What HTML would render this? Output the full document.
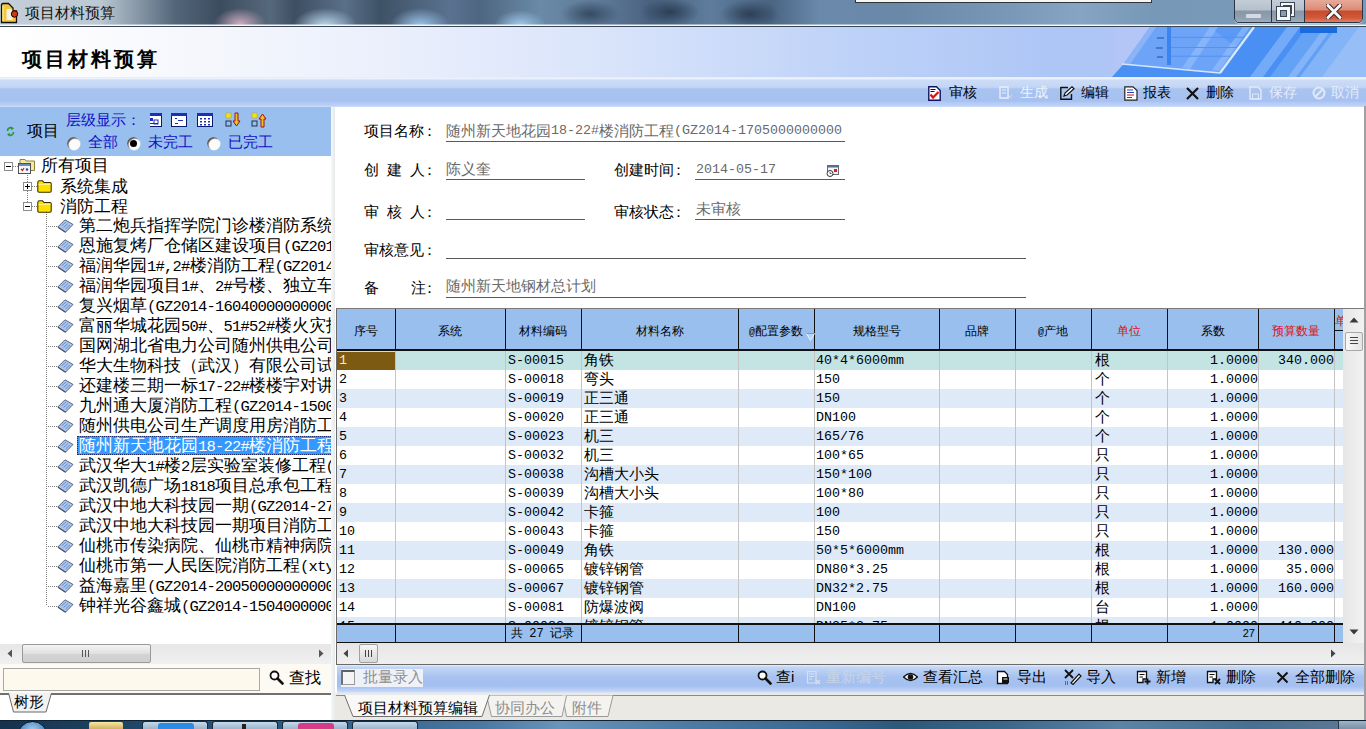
<!DOCTYPE html><html><head><meta charset="utf-8"><title>项目材料预算</title><style>
*{margin:0;padding:0;box-sizing:border-box}
html,body{width:1366px;height:729px;overflow:hidden;background:#fff;font-family:"Liberation Sans",sans-serif;color:#000}
.abs{position:absolute}
.t{position:absolute;white-space:nowrap;line-height:1}
</style></head><body>
<div class="abs" style="left:0;top:0;width:1366px;height:25px;background:radial-gradient(ellipse 26px 16px at 240px 24px,rgba(215,175,195,0.95),rgba(190,150,170,0) 100%),radial-gradient(ellipse 32px 18px at 325px 26px,rgba(190,220,240,1),rgba(170,200,230,0) 100%),radial-gradient(ellipse 30px 18px at 420px 26px,rgba(160,200,238,1),rgba(150,190,230,0) 100%),radial-gradient(ellipse 26px 16px at 520px 26px,rgba(165,205,240,1),rgba(150,190,230,0) 100%),radial-gradient(ellipse 30px 14px at 670px 12px,rgba(40,58,80,0.9),rgba(48,68,90,0) 100%),radial-gradient(ellipse 30px 14px at 750px 14px,rgba(40,58,80,0.9),rgba(48,68,90,0) 100%),radial-gradient(ellipse 30px 14px at 590px 14px,rgba(44,62,84,0.8),rgba(48,68,90,0) 100%),linear-gradient(90deg,#c4ced8 0,#bcc8d2 100px,#8494a4 140px,#52667a 175px,#3c4c5e 220px,#56687c 270px,#3e4e62 295px,#5a7088 345px,#3e5266 380px,#5a7290 450px,#4e6680 480px,#6a8aa8 540px,#5e7a98 600px,#4a6280 650px,#5e7c9c 710px,#4a6482 770px,#6a8aac 820px,#6a88a8 900px,#7896b6 1000px,#86a4c4 1080px,#7898b8 1150px,#7a9aba 1366px)"></div>
<div class="abs" style="left:0;top:24px;width:1366px;height:2px;background:linear-gradient(rgba(230,236,242,0.6),rgba(230,236,242,0.3))"></div>
<div class="abs" style="left:0;top:26px;width:1366px;height:1px;background:#3a4652"></div>
<svg class="abs" style="left:0;top:2px" width="20" height="22" viewBox="0 0 20 22"><path d="M1.5 3 Q1.5 1.5 3 1.5 H8.5 L13 6 V9 H16.5 V20.5 H1.5Z" fill="#f2c840" stroke="#111" stroke-width="1.3"/><path d="M6.5 7 H11 L12.5 9 V18 H6.5Z" fill="#f4f0e6"/><path d="M3 4 V19" stroke="#fff3a0" stroke-width="1"/><circle cx="14.5" cy="12" r="3.2" fill="#c83a18" stroke="#200" stroke-width="1"/></svg>
<div class="t" style="left:25px;top:5px;font-size:15px;color:#111">项目材料预算</div>
<div class="abs" style="left:855px;top:0;width:297px;height:3px;background:#f4f6f8;border:1px solid #333;border-top:0"></div>
<div class="abs" style="left:1234px;top:-3px;width:129px;height:26px;border:1px solid #2a3644;border-radius:0 0 5px 5px;overflow:hidden;box-shadow:0 1px 0 rgba(255,255,255,0.5)"><div class="abs" style="left:0;top:0;width:36px;height:25px;background:linear-gradient(#c6d0da 0,#b4c0cc 12px,#8896a6 13px,#94a4b4 22px,#a8b8c8 25px)"></div><div class="abs" style="left:36px;top:0;width:1px;height:25px;background:#2a3644"></div><div class="abs" style="left:37px;top:0;width:32px;height:25px;background:linear-gradient(#c6d0da 0,#b4c0cc 12px,#8896a6 13px,#94a4b4 22px,#a8b8c8 25px)"></div><div class="abs" style="left:69px;top:0;width:1px;height:25px;background:#2a3644"></div><div class="abs" style="left:70px;top:0;width:59px;height:25px;background:linear-gradient(#eab0a0 0,#dc8a76 12px,#c84a2c 13px,#d05a3a 20px,#e88a70 25px)"></div><div class="abs" style="left:11px;top:16px;width:15px;height:4px;background:#d4dae2;border-radius:1px"></div><div class="abs" style="left:46px;top:5px;width:13px;height:13px;border:2px solid #f4f6f8;box-shadow:0 0 0 1px #3a4654, inset 0 0 0 1px #3a4654"></div><div class="abs" style="left:42px;top:9px;width:13px;height:13px;border:3px solid #f4f6f8;background:#8a9aaa;box-shadow:0 0 0 1px #3a4654, inset 0 0 0 1px #3a4654"></div><svg class="abs" style="left:91px;top:6px" width="16" height="15" viewBox="0 0 16 15"><path d="M2 1.5 L14 13.5 M14 1.5 L2 13.5" stroke="#3a2a2a" stroke-width="5" stroke-linecap="round"/><path d="M2 1.5 L14 13.5 M14 1.5 L2 13.5" stroke="#f8f8f8" stroke-width="3" stroke-linecap="round"/></svg></div>
<div class="abs" style="left:0;top:27px;width:1366px;height:50px;background:linear-gradient(90deg,#ffffff 0,#f8f9fd 150px,#edf1fc 350px,#d8e3fa 620px,#bed2f8 850px,#aec6f6 1050px,#a4c0f2 1366px)"></div>
<div class="t" style="left:22px;top:49px;font-size:20px;font-weight:bold;letter-spacing:3px;color:#000;font-family:'Liberation Serif',serif">项目材料预算</div>
<div class="abs" style="left:0;top:77px;width:1366px;height:30px;background:linear-gradient(#dce6f8 0,#f0f5fe 1px,#e6eefc 2px,#cddcf6 3px,#c4d6f5 10px,#aac4f0 12px,#a6c0f0 24px,#b4cbf4 26px,#bcd2f8 29px,#d8e4fa 30px)"></div>
<svg class="abs" style="left:1100px;top:27px" width="266" height="50" viewBox="0 0 266 50"><defs><linearGradient id="hg" x1="0" x2="1" y1="0" y2="0"><stop offset="0" stop-color="#b4c6f6" stop-opacity="0"/><stop offset="0.08" stop-color="#b4c6f6"/><stop offset="1" stop-color="#aac4f6"/></linearGradient></defs><rect x="0" y="0" width="266" height="50" fill="url(#hg)"/><path d="M23.6 37 L120 45.6 L154 0 H205 V50 H12Z" fill="#4a90f4"/><path d="M23.6 37 L50 0 H154 L120 45.6Z" fill="#6ea4f8"/><path d="M110 0 H154 L138 22Z" fill="#4c92f4" opacity="0.6"/><path d="M50 0 L23.6 37 L30 37.5 L56 0Z" fill="#8ab4f6"/><path d="M82 41 L110 0 H118 L90 42Z" fill="#9cc2fa" opacity="0.55"/><path d="M112 43 L143 0 H150 L119 44Z" fill="#9cc2fa" opacity="0.55"/><rect x="67" y="0" width="4" height="38" fill="#3a84f0"/><path d="M71 10.3 H146 M71 20.5 H139 M71 29.2 H133" stroke="#5292f2" stroke-width="1"/><path d="M57 11 H64 M56 21 H63 M57 30 H63" stroke="#4a78c8" stroke-width="2"/><path d="M22 37 L120 46" stroke="#d4e6fc" stroke-width="1.6"/><path d="M120 46 L154 0" stroke="#d8e8fc" stroke-width="2.2"/><path d="M150 50 L187 0 H200 L163 50Z" fill="#78aef8" opacity="0.9"/><path d="M170 50 L207 0 H226 L189 50Z" fill="#64a2f6"/><path d="M188 50 L225 0 H266 V50Z" fill="#84b4f8"/><path d="M222 50 L259 0 H266 V50Z" fill="#98bef8"/><path d="M196 50 L233 0 H237 L200 50Z" fill="#5a9af4" opacity="0.8"/><rect x="200" y="0" width="37" height="6" fill="#1a6ae0"/></svg>
<svg class="abs" style="left:928px;top:86px" width="13" height="15" viewBox="0 0 13 15"><path d="M0.8 0.8 H8.5 L12.2 4.5 V14.2 H0.8Z" fill="#fff" stroke="#101060" stroke-width="1.4"/><path d="M2.5 3.5 H7.5 M2.5 5.5 H6.5" stroke="#111" stroke-width="1.1"/><path d="M2.5 8.5 L5 11.5 L10.5 6" stroke="#e01010" stroke-width="2.2" fill="none"/></svg>
<div class="t" style="left:949px;top:85px;font-size:14px;color:#000">审核</div>
<svg class="abs" style="left:999px;top:86px" width="14" height="14" viewBox="0 0 14 14"><path d="M1 1 H9 V12 H1Z" fill="none" stroke="#e8eef8" stroke-width="1.4"/><path d="M3 4 H7 M3 7 H7" stroke="#e8eef8"/><path d="M9 9 L13 13 M13 9 L9 13" stroke="#e8eef8" stroke-dasharray="1 1"/></svg>
<div class="t" style="left:1020px;top:85px;font-size:14px;color:#eef2fa">生成</div>
<svg class="abs" style="left:1060px;top:86px" width="15" height="14" viewBox="0 0 15 14"><path d="M0.8 1.5 H8 M0.8 1 V13.2 H11.5 V8" stroke="#111" stroke-width="1.4" fill="none"/><path d="M4 10 L5 7 L12 0.8 L14 2.8 L7 9Z" fill="#fff" stroke="#111" stroke-width="1.2"/></svg>
<div class="t" style="left:1081px;top:85px;font-size:14px;color:#000">编辑</div>
<svg class="abs" style="left:1124px;top:86px" width="14" height="15" viewBox="0 0 14 15"><path d="M0.8 0.8 H9 L13 4.5 V14.2 H0.8Z" fill="#fff" stroke="#222" stroke-width="1.2"/><path d="M3 4 H9 M3 6.5 H10" stroke="#2040c0" stroke-width="1.2"/><path d="M3 9 H10 M3 11.5 H8" stroke="#d01010" stroke-width="1.2"/></svg>
<div class="t" style="left:1143px;top:85px;font-size:14px;color:#000">报表</div>
<svg class="abs" style="left:1186px;top:87px" width="13" height="13" viewBox="0 0 13 13"><path d="M1 1 L12 12 M12 1 L1 12" stroke="#111" stroke-width="2.2"/></svg>
<div class="t" style="left:1206px;top:85px;font-size:14px;color:#000">删除</div>
<svg class="abs" style="left:1249px;top:86px" width="13" height="14" viewBox="0 0 13 14"><path d="M1 1 H9 L12 4 V13 H1Z" fill="none" stroke="#dfe8f6" stroke-width="1.5"/><path d="M3.5 8 H9.5 V13 H3.5Z" fill="none" stroke="#dfe8f6"/></svg>
<div class="t" style="left:1269px;top:85px;font-size:14px;color:#e4ecf8">保存</div>
<svg class="abs" style="left:1312px;top:86px" width="14" height="14" viewBox="0 0 14 14"><circle cx="7" cy="7" r="5.5" fill="none" stroke="#dfe8f6" stroke-width="2"/><path d="M3.5 10.5 L10.5 3.5" stroke="#dfe8f6" stroke-width="2"/></svg>
<div class="t" style="left:1331px;top:85px;font-size:14px;color:#e4ecf8">取消</div>
<div class="abs" style="left:0;top:107px;width:331px;height:49px;background:#98bfee"></div>
<div class="abs" style="left:0;top:156px;width:331px;height:488px;background:#fff"></div>
<div class="abs" style="left:331px;top:107px;width:4px;height:613px;background:linear-gradient(90deg,#f4f8fc,#e8e8e8)"></div>
<svg class="abs" style="left:6px;top:126px" width="9" height="11" viewBox="0 0 9 11"><path d="M1.5 5 A3 3 0 0 1 6.5 2.5" stroke="#2a9a2a" stroke-width="1.6" fill="none"/><path d="M5 0.5 L8 2.5 L5.2 4.2Z" fill="#2a9a2a"/><path d="M7.5 6 A3 3 0 0 1 2.5 8.5" stroke="#2a9a2a" stroke-width="1.6" fill="none"/><path d="M4 10.5 L1 8.5 L3.8 6.8Z" fill="#2a9a2a"/></svg>
<div class="t" style="left:27px;top:123px;font-size:15.5px;color:#000">项目</div>
<div class="t" style="left:66px;top:112px;font-size:15px;color:#1010c8">层级显示：</div>
<div class="abs" style="left:150px;top:0;width:12px;height:140px;overflow:hidden"><div class="abs" style="left:-4px;top:0;width:16px;height:140px"><svg class="abs" style="left:0px;top:113px" width="16" height="14" viewBox="0 0 16 14"><rect x="0.5" y="0.5" width="15" height="13" fill="#fff" stroke="#0a1a6a"/><rect x="0" y="0" width="16" height="3" fill="#1a30b8"/><rect x="3" y="5" width="4" height="3" fill="#1a30b8"/><rect x="8" y="7" width="4" height="4" fill="none" stroke="#1a30b8"/><rect x="4" y="10" width="8" height="1" fill="#1a30b8"/></svg></div></div>
<svg class="abs" style="left:171px;top:113px" width="16" height="14" viewBox="0 0 16 14"><rect x="0.5" y="0.5" width="15" height="13" fill="#fff" stroke="#0a1a6a"/><rect x="0" y="0" width="16" height="3" fill="#1a30b8"/><rect x="4" y="5" width="2" height="1" fill="#1a30b8"/><rect x="7" y="7" width="5" height="1" fill="#1a30b8"/><rect x="4" y="10" width="3" height="1" fill="#1a30b8"/></svg>
<svg class="abs" style="left:197px;top:113px" width="16" height="14" viewBox="0 0 16 14"><rect x="0.5" y="0.5" width="15" height="13" fill="#fff" stroke="#0a1a6a"/><rect x="0" y="0" width="16" height="3" fill="#1a30b8"/><rect x="3" y="5" width="2" height="1.5" fill="#1a30b8"/><rect x="3" y="8" width="2" height="1.5" fill="#1a30b8"/><rect x="3" y="11" width="2" height="1.5" fill="#1a30b8"/><rect x="7" y="5" width="2" height="1.5" fill="#1a30b8"/><rect x="7" y="8" width="2" height="1.5" fill="#1a30b8"/><rect x="7" y="11" width="2" height="1.5" fill="#1a30b8"/><rect x="11" y="5" width="2" height="1.5" fill="#1a30b8"/><rect x="11" y="8" width="2" height="1.5" fill="#1a30b8"/><rect x="11" y="11" width="2" height="1.5" fill="#1a30b8"/></svg>
<svg class="abs" style="left:225px;top:112px" width="16" height="16" viewBox="0 0 16 16"><rect x="1" y="1" width="5" height="5" fill="#f0e020" stroke="#c0a000" stroke-width="0.5"/><rect x="1" y="9" width="5" height="5" fill="none" stroke="#203050"/><path d="M10 1 H13 V9 H15 L11.5 14 L8 9 H10Z" fill="#f0c020" stroke="#a01010"/></svg>
<svg class="abs" style="left:251px;top:112px" width="16" height="16" viewBox="0 0 16 16"><rect x="1" y="1" width="5" height="5" fill="#f0e020" stroke="#c0a000" stroke-width="0.5"/><rect x="1" y="9" width="5" height="5" fill="none" stroke="#203050"/><path d="M10 15 H13 V7 H15 L11.5 2 L8 7 H10Z" fill="#f0c020" stroke="#a01010"/></svg>
<div class="abs" style="left:67px;top:137px;width:13px;height:13px;border-radius:50%;background:#fcfcfc;box-shadow:inset 1.5px 1.5px 1px #5a5a5a, 0.5px 0.5px 0 #f0f0f0"></div>
<div class="abs" style="left:127px;top:137px;width:13px;height:13px;border-radius:50%;background:#fcfcfc;box-shadow:inset 1.5px 1.5px 1px #5a5a5a, 0.5px 0.5px 0 #f0f0f0"></div><div class="abs" style="left:130px;top:140px;width:7px;height:7px;border-radius:50%;background:#000"></div>
<div class="abs" style="left:207px;top:137px;width:13px;height:13px;border-radius:50%;background:#fcfcfc;box-shadow:inset 1.5px 1.5px 1px #5a5a5a, 0.5px 0.5px 0 #f0f0f0"></div>
<div class="t" style="left:88px;top:134px;font-size:15px;color:#1010c8">全部</div>
<div class="t" style="left:148px;top:134px;font-size:15px;color:#1010c8">未完工</div>
<div class="t" style="left:228px;top:134px;font-size:15px;color:#1010c8">已完工</div>
<div class="abs" style="left:0;top:155px;width:331px;height:489px;overflow:hidden">
<div class="abs" style="left:27px;top:16px;width:1px;height:35px;background:repeating-linear-gradient(#808080 0 1px,transparent 1px 2px)"></div>
<div class="abs" style="left:46px;top:57px;width:1px;height:394px;background:repeating-linear-gradient(#808080 0 1px,transparent 1px 2px)"></div>
<div class="abs" style="left:13px;top:11px;width:6px;height:1px;background:repeating-linear-gradient(90deg,#808080 0 1px,transparent 1px 2px)"></div>
<div class="abs" style="left:32px;top:31px;width:6px;height:1px;background:repeating-linear-gradient(90deg,#808080 0 1px,transparent 1px 2px)"></div>
<div class="abs" style="left:32px;top:51px;width:6px;height:1px;background:repeating-linear-gradient(90deg,#808080 0 1px,transparent 1px 2px)"></div>
<div class="abs" style="left:4px;top:7px;width:9px;height:9px;border:1px solid #8c8c8c;background:#fff"></div><div class="abs" style="left:6px;top:11px;width:5px;height:1px;background:#000"></div>
<div class="abs" style="left:23px;top:27px;width:9px;height:9px;border:1px solid #8c8c8c;background:#fff"></div><div class="abs" style="left:25px;top:31px;width:5px;height:1px;background:#000"></div><div class="abs" style="left:27px;top:29px;width:1px;height:5px;background:#000"></div>
<div class="abs" style="left:23px;top:47px;width:9px;height:9px;border:1px solid #8c8c8c;background:#fff"></div><div class="abs" style="left:25px;top:51px;width:5px;height:1px;background:#000"></div>
<svg class="abs" style="left:18px;top:3px" width="18" height="16" viewBox="0 0 18 16"><path d="M2 1.5 H7 L8 3 H16.5 V12.5 H2Z" fill="#f2eaa0" stroke="#8a8040" stroke-width="1"/><rect x="0.5" y="5.5" width="12" height="10" fill="#f8f8f8" stroke="#505050"/><rect x="1" y="6" width="11" height="2" fill="#6a8ac8"/><path d="M3 11 L4.5 12.5 L6 10" stroke="#c02020" stroke-width="1.2" fill="none"/><circle cx="9" cy="11.5" r="1.3" fill="#2050c0"/></svg>
<div class="t" style="left:41px;top:2px;font-size:17px">所有项目</div>
<svg class="abs" style="left:37px;top:25px" width="15" height="13" viewBox="0 0 15 13"><path d="M0.8 2.5 Q0.8 0.8 2.5 0.8 H5.5 L7 2.5 H13 Q14.2 2.5 14.2 3.8 V11 Q14.2 12.2 13 12.2 H2 Q0.8 12.2 0.8 11Z" fill="#ffe000" stroke="#3a3000" stroke-width="1.1"/><path d="M1.5 4.5 H13.5" stroke="#fff6a0" stroke-width="0.8"/></svg>
<div class="t" style="left:60px;top:23px;font-size:17px">系统集成</div>
<svg class="abs" style="left:37px;top:45px" width="15" height="13" viewBox="0 0 15 13"><path d="M0.8 2.5 Q0.8 0.8 2.5 0.8 H5.5 L7 2.5 H13 Q14.2 2.5 14.2 3.8 V11 Q14.2 12.2 13 12.2 H2 Q0.8 12.2 0.8 11Z" fill="#ffe000" stroke="#3a3000" stroke-width="1.1"/><path d="M1.5 4.5 H13.5" stroke="#fff6a0" stroke-width="0.8"/></svg>
<div class="t" style="left:60px;top:43px;font-size:17px">消防工程</div>
<div class="abs" style="left:48px;top:71px;width:9px;height:1px;background:repeating-linear-gradient(90deg,#808080 0 1px,transparent 1px 2px)"></div>
<svg class="abs" style="left:57px;top:64px" width="17" height="14" viewBox="0 0 17 14"><path d="M0.8 8 L8 0.8 L16 5.5 L8.5 13.2Z" fill="#aac6ee" stroke="#5a6680" stroke-width="1"/><path d="M4.5 7 L9 3 M6.5 8.5 L11 4.5 M8.5 10 L13 6" stroke="#5a80c0" stroke-width="0.8"/><path d="M1 8.3 L8.5 13.2" stroke="#4a5264" stroke-width="1.2"/></svg>
<div class="t" style="left:79px;top:62px;font-size:17px">第二炮兵指挥学院门诊楼消防系统工程</div>
<div class="abs" style="left:48px;top:91px;width:9px;height:1px;background:repeating-linear-gradient(90deg,#808080 0 1px,transparent 1px 2px)"></div>
<svg class="abs" style="left:57px;top:84px" width="17" height="14" viewBox="0 0 17 14"><path d="M0.8 8 L8 0.8 L16 5.5 L8.5 13.2Z" fill="#aac6ee" stroke="#5a6680" stroke-width="1"/><path d="M4.5 7 L9 3 M6.5 8.5 L11 4.5 M8.5 10 L13 6" stroke="#5a80c0" stroke-width="0.8"/><path d="M1 8.3 L8.5 13.2" stroke="#4a5264" stroke-width="1.2"/></svg>
<div class="t" style="left:79px;top:82px;font-size:17px">恩施复烤厂仓储区建设项目<span style="font-family:'Liberation Mono',monospace;font-size:15.5px;letter-spacing:-0.8px;position:relative;top:0px">(GZ2014-</span></div>
<div class="abs" style="left:48px;top:111px;width:9px;height:1px;background:repeating-linear-gradient(90deg,#808080 0 1px,transparent 1px 2px)"></div>
<svg class="abs" style="left:57px;top:104px" width="17" height="14" viewBox="0 0 17 14"><path d="M0.8 8 L8 0.8 L16 5.5 L8.5 13.2Z" fill="#aac6ee" stroke="#5a6680" stroke-width="1"/><path d="M4.5 7 L9 3 M6.5 8.5 L11 4.5 M8.5 10 L13 6" stroke="#5a80c0" stroke-width="0.8"/><path d="M1 8.3 L8.5 13.2" stroke="#4a5264" stroke-width="1.2"/></svg>
<div class="t" style="left:79px;top:102px;font-size:17px">福润华园<span style="font-family:'Liberation Mono',monospace;font-size:15.5px;letter-spacing:-0.8px;position:relative;top:0px">1#,2#</span>楼消防工程<span style="font-family:'Liberation Mono',monospace;font-size:15.5px;letter-spacing:-0.8px;position:relative;top:0px">(GZ2014-</span></div>
<div class="abs" style="left:48px;top:131px;width:9px;height:1px;background:repeating-linear-gradient(90deg,#808080 0 1px,transparent 1px 2px)"></div>
<svg class="abs" style="left:57px;top:124px" width="17" height="14" viewBox="0 0 17 14"><path d="M0.8 8 L8 0.8 L16 5.5 L8.5 13.2Z" fill="#aac6ee" stroke="#5a6680" stroke-width="1"/><path d="M4.5 7 L9 3 M6.5 8.5 L11 4.5 M8.5 10 L13 6" stroke="#5a80c0" stroke-width="0.8"/><path d="M1 8.3 L8.5 13.2" stroke="#4a5264" stroke-width="1.2"/></svg>
<div class="t" style="left:79px;top:122px;font-size:17px">福润华园项目<span style="font-family:'Liberation Mono',monospace;font-size:15.5px;letter-spacing:-0.8px;position:relative;top:0px">1#</span>、<span style="font-family:'Liberation Mono',monospace;font-size:15.5px;letter-spacing:-0.8px;position:relative;top:0px">2#</span>号楼、独立车库</div>
<div class="abs" style="left:48px;top:151px;width:9px;height:1px;background:repeating-linear-gradient(90deg,#808080 0 1px,transparent 1px 2px)"></div>
<svg class="abs" style="left:57px;top:144px" width="17" height="14" viewBox="0 0 17 14"><path d="M0.8 8 L8 0.8 L16 5.5 L8.5 13.2Z" fill="#aac6ee" stroke="#5a6680" stroke-width="1"/><path d="M4.5 7 L9 3 M6.5 8.5 L11 4.5 M8.5 10 L13 6" stroke="#5a80c0" stroke-width="0.8"/><path d="M1 8.3 L8.5 13.2" stroke="#4a5264" stroke-width="1.2"/></svg>
<div class="t" style="left:79px;top:142px;font-size:17px">复兴烟草<span style="font-family:'Liberation Mono',monospace;font-size:15.5px;letter-spacing:-0.8px;position:relative;top:0px">(GZ2014-1604000000000000</span></div>
<div class="abs" style="left:48px;top:171px;width:9px;height:1px;background:repeating-linear-gradient(90deg,#808080 0 1px,transparent 1px 2px)"></div>
<svg class="abs" style="left:57px;top:164px" width="17" height="14" viewBox="0 0 17 14"><path d="M0.8 8 L8 0.8 L16 5.5 L8.5 13.2Z" fill="#aac6ee" stroke="#5a6680" stroke-width="1"/><path d="M4.5 7 L9 3 M6.5 8.5 L11 4.5 M8.5 10 L13 6" stroke="#5a80c0" stroke-width="0.8"/><path d="M1 8.3 L8.5 13.2" stroke="#4a5264" stroke-width="1.2"/></svg>
<div class="t" style="left:79px;top:162px;font-size:17px">富丽华城花园<span style="font-family:'Liberation Mono',monospace;font-size:15.5px;letter-spacing:-0.8px;position:relative;top:0px">50#</span>、<span style="font-family:'Liberation Mono',monospace;font-size:15.5px;letter-spacing:-0.8px;position:relative;top:0px">51#52#</span>楼火灾报警</div>
<div class="abs" style="left:48px;top:191px;width:9px;height:1px;background:repeating-linear-gradient(90deg,#808080 0 1px,transparent 1px 2px)"></div>
<svg class="abs" style="left:57px;top:184px" width="17" height="14" viewBox="0 0 17 14"><path d="M0.8 8 L8 0.8 L16 5.5 L8.5 13.2Z" fill="#aac6ee" stroke="#5a6680" stroke-width="1"/><path d="M4.5 7 L9 3 M6.5 8.5 L11 4.5 M8.5 10 L13 6" stroke="#5a80c0" stroke-width="0.8"/><path d="M1 8.3 L8.5 13.2" stroke="#4a5264" stroke-width="1.2"/></svg>
<div class="t" style="left:79px;top:182px;font-size:17px">国网湖北省电力公司随州供电公司</div>
<div class="abs" style="left:48px;top:211px;width:9px;height:1px;background:repeating-linear-gradient(90deg,#808080 0 1px,transparent 1px 2px)"></div>
<svg class="abs" style="left:57px;top:204px" width="17" height="14" viewBox="0 0 17 14"><path d="M0.8 8 L8 0.8 L16 5.5 L8.5 13.2Z" fill="#aac6ee" stroke="#5a6680" stroke-width="1"/><path d="M4.5 7 L9 3 M6.5 8.5 L11 4.5 M8.5 10 L13 6" stroke="#5a80c0" stroke-width="0.8"/><path d="M1 8.3 L8.5 13.2" stroke="#4a5264" stroke-width="1.2"/></svg>
<div class="t" style="left:79px;top:202px;font-size:17px">华大生物科技（武汉）有限公司试验</div>
<div class="abs" style="left:48px;top:231px;width:9px;height:1px;background:repeating-linear-gradient(90deg,#808080 0 1px,transparent 1px 2px)"></div>
<svg class="abs" style="left:57px;top:224px" width="17" height="14" viewBox="0 0 17 14"><path d="M0.8 8 L8 0.8 L16 5.5 L8.5 13.2Z" fill="#aac6ee" stroke="#5a6680" stroke-width="1"/><path d="M4.5 7 L9 3 M6.5 8.5 L11 4.5 M8.5 10 L13 6" stroke="#5a80c0" stroke-width="0.8"/><path d="M1 8.3 L8.5 13.2" stroke="#4a5264" stroke-width="1.2"/></svg>
<div class="t" style="left:79px;top:222px;font-size:17px">还建楼三期一标<span style="font-family:'Liberation Mono',monospace;font-size:15.5px;letter-spacing:-0.8px;position:relative;top:0px">17-22#</span>楼楼宇对讲</div>
<div class="abs" style="left:48px;top:251px;width:9px;height:1px;background:repeating-linear-gradient(90deg,#808080 0 1px,transparent 1px 2px)"></div>
<svg class="abs" style="left:57px;top:244px" width="17" height="14" viewBox="0 0 17 14"><path d="M0.8 8 L8 0.8 L16 5.5 L8.5 13.2Z" fill="#aac6ee" stroke="#5a6680" stroke-width="1"/><path d="M4.5 7 L9 3 M6.5 8.5 L11 4.5 M8.5 10 L13 6" stroke="#5a80c0" stroke-width="0.8"/><path d="M1 8.3 L8.5 13.2" stroke="#4a5264" stroke-width="1.2"/></svg>
<div class="t" style="left:79px;top:242px;font-size:17px">九州通大厦消防工程<span style="font-family:'Liberation Mono',monospace;font-size:15.5px;letter-spacing:-0.8px;position:relative;top:0px">(GZ2014-15000</span></div>
<div class="abs" style="left:48px;top:271px;width:9px;height:1px;background:repeating-linear-gradient(90deg,#808080 0 1px,transparent 1px 2px)"></div>
<svg class="abs" style="left:57px;top:264px" width="17" height="14" viewBox="0 0 17 14"><path d="M0.8 8 L8 0.8 L16 5.5 L8.5 13.2Z" fill="#aac6ee" stroke="#5a6680" stroke-width="1"/><path d="M4.5 7 L9 3 M6.5 8.5 L11 4.5 M8.5 10 L13 6" stroke="#5a80c0" stroke-width="0.8"/><path d="M1 8.3 L8.5 13.2" stroke="#4a5264" stroke-width="1.2"/></svg>
<div class="t" style="left:79px;top:262px;font-size:17px">随州供电公司生产调度用房消防工程</div>
<div class="abs" style="left:48px;top:291px;width:9px;height:1px;background:repeating-linear-gradient(90deg,#808080 0 1px,transparent 1px 2px)"></div>
<svg class="abs" style="left:57px;top:284px" width="17" height="14" viewBox="0 0 17 14"><path d="M0.8 8 L8 0.8 L16 5.5 L8.5 13.2Z" fill="#aac6ee" stroke="#5a6680" stroke-width="1"/><path d="M4.5 7 L9 3 M6.5 8.5 L11 4.5 M8.5 10 L13 6" stroke="#5a80c0" stroke-width="0.8"/><path d="M1 8.3 L8.5 13.2" stroke="#4a5264" stroke-width="1.2"/></svg>
<div class="abs" style="left:77px;top:281px;width:260px;height:19px;background:#3399ff;outline:1px dotted #1a2a6a;outline-offset:-1px"></div>
<div class="t" style="left:79px;top:282px;font-size:17px;color:#fff">随州新天地花园<span style="font-family:'Liberation Mono',monospace;font-size:15.5px;letter-spacing:-0.8px;position:relative;top:0px">18-22#</span>楼消防工程<span style="font-family:'Liberation Mono',monospace;font-size:15.5px;letter-spacing:-0.8px;position:relative;top:0px">(GZ</span></div>
<div class="abs" style="left:48px;top:311px;width:9px;height:1px;background:repeating-linear-gradient(90deg,#808080 0 1px,transparent 1px 2px)"></div>
<svg class="abs" style="left:57px;top:304px" width="17" height="14" viewBox="0 0 17 14"><path d="M0.8 8 L8 0.8 L16 5.5 L8.5 13.2Z" fill="#aac6ee" stroke="#5a6680" stroke-width="1"/><path d="M4.5 7 L9 3 M6.5 8.5 L11 4.5 M8.5 10 L13 6" stroke="#5a80c0" stroke-width="0.8"/><path d="M1 8.3 L8.5 13.2" stroke="#4a5264" stroke-width="1.2"/></svg>
<div class="t" style="left:79px;top:302px;font-size:17px">武汉华大<span style="font-family:'Liberation Mono',monospace;font-size:15.5px;letter-spacing:-0.8px;position:relative;top:0px">1#</span>楼<span style="font-family:'Liberation Mono',monospace;font-size:15.5px;letter-spacing:-0.8px;position:relative;top:0px">2</span>层实验室装修工程<span style="font-family:'Liberation Mono',monospace;font-size:15.5px;letter-spacing:-0.8px;position:relative;top:0px">(GZ</span></div>
<div class="abs" style="left:48px;top:331px;width:9px;height:1px;background:repeating-linear-gradient(90deg,#808080 0 1px,transparent 1px 2px)"></div>
<svg class="abs" style="left:57px;top:324px" width="17" height="14" viewBox="0 0 17 14"><path d="M0.8 8 L8 0.8 L16 5.5 L8.5 13.2Z" fill="#aac6ee" stroke="#5a6680" stroke-width="1"/><path d="M4.5 7 L9 3 M6.5 8.5 L11 4.5 M8.5 10 L13 6" stroke="#5a80c0" stroke-width="0.8"/><path d="M1 8.3 L8.5 13.2" stroke="#4a5264" stroke-width="1.2"/></svg>
<div class="t" style="left:79px;top:322px;font-size:17px">武汉凯德广场<span style="font-family:'Liberation Mono',monospace;font-size:15.5px;letter-spacing:-0.8px;position:relative;top:0px">1818</span>项目总承包工程<span style="font-family:'Liberation Mono',monospace;font-size:15.5px;letter-spacing:-0.8px;position:relative;top:0px">(G</span></div>
<div class="abs" style="left:48px;top:351px;width:9px;height:1px;background:repeating-linear-gradient(90deg,#808080 0 1px,transparent 1px 2px)"></div>
<svg class="abs" style="left:57px;top:344px" width="17" height="14" viewBox="0 0 17 14"><path d="M0.8 8 L8 0.8 L16 5.5 L8.5 13.2Z" fill="#aac6ee" stroke="#5a6680" stroke-width="1"/><path d="M4.5 7 L9 3 M6.5 8.5 L11 4.5 M8.5 10 L13 6" stroke="#5a80c0" stroke-width="0.8"/><path d="M1 8.3 L8.5 13.2" stroke="#4a5264" stroke-width="1.2"/></svg>
<div class="t" style="left:79px;top:342px;font-size:17px">武汉中地大科技园一期<span style="font-family:'Liberation Mono',monospace;font-size:15.5px;letter-spacing:-0.8px;position:relative;top:0px">(GZ2014-27000</span></div>
<div class="abs" style="left:48px;top:371px;width:9px;height:1px;background:repeating-linear-gradient(90deg,#808080 0 1px,transparent 1px 2px)"></div>
<svg class="abs" style="left:57px;top:364px" width="17" height="14" viewBox="0 0 17 14"><path d="M0.8 8 L8 0.8 L16 5.5 L8.5 13.2Z" fill="#aac6ee" stroke="#5a6680" stroke-width="1"/><path d="M4.5 7 L9 3 M6.5 8.5 L11 4.5 M8.5 10 L13 6" stroke="#5a80c0" stroke-width="0.8"/><path d="M1 8.3 L8.5 13.2" stroke="#4a5264" stroke-width="1.2"/></svg>
<div class="t" style="left:79px;top:362px;font-size:17px">武汉中地大科技园一期项目消防工程</div>
<div class="abs" style="left:48px;top:391px;width:9px;height:1px;background:repeating-linear-gradient(90deg,#808080 0 1px,transparent 1px 2px)"></div>
<svg class="abs" style="left:57px;top:384px" width="17" height="14" viewBox="0 0 17 14"><path d="M0.8 8 L8 0.8 L16 5.5 L8.5 13.2Z" fill="#aac6ee" stroke="#5a6680" stroke-width="1"/><path d="M4.5 7 L9 3 M6.5 8.5 L11 4.5 M8.5 10 L13 6" stroke="#5a80c0" stroke-width="0.8"/><path d="M1 8.3 L8.5 13.2" stroke="#4a5264" stroke-width="1.2"/></svg>
<div class="t" style="left:79px;top:382px;font-size:17px">仙桃市传染病院、仙桃市精神病院消防</div>
<div class="abs" style="left:48px;top:411px;width:9px;height:1px;background:repeating-linear-gradient(90deg,#808080 0 1px,transparent 1px 2px)"></div>
<svg class="abs" style="left:57px;top:404px" width="17" height="14" viewBox="0 0 17 14"><path d="M0.8 8 L8 0.8 L16 5.5 L8.5 13.2Z" fill="#aac6ee" stroke="#5a6680" stroke-width="1"/><path d="M4.5 7 L9 3 M6.5 8.5 L11 4.5 M8.5 10 L13 6" stroke="#5a80c0" stroke-width="0.8"/><path d="M1 8.3 L8.5 13.2" stroke="#4a5264" stroke-width="1.2"/></svg>
<div class="t" style="left:79px;top:402px;font-size:17px">仙桃市第一人民医院消防工程<span style="font-family:'Liberation Mono',monospace;font-size:15.5px;letter-spacing:-0.8px;position:relative;top:0px">(xtyy</span></div>
<div class="abs" style="left:48px;top:431px;width:9px;height:1px;background:repeating-linear-gradient(90deg,#808080 0 1px,transparent 1px 2px)"></div>
<svg class="abs" style="left:57px;top:424px" width="17" height="14" viewBox="0 0 17 14"><path d="M0.8 8 L8 0.8 L16 5.5 L8.5 13.2Z" fill="#aac6ee" stroke="#5a6680" stroke-width="1"/><path d="M4.5 7 L9 3 M6.5 8.5 L11 4.5 M8.5 10 L13 6" stroke="#5a80c0" stroke-width="0.8"/><path d="M1 8.3 L8.5 13.2" stroke="#4a5264" stroke-width="1.2"/></svg>
<div class="t" style="left:79px;top:422px;font-size:17px">益海嘉里<span style="font-family:'Liberation Mono',monospace;font-size:15.5px;letter-spacing:-0.8px;position:relative;top:0px">(GZ2014-2005000000000000</span></div>
<div class="abs" style="left:48px;top:451px;width:9px;height:1px;background:repeating-linear-gradient(90deg,#808080 0 1px,transparent 1px 2px)"></div>
<svg class="abs" style="left:57px;top:444px" width="17" height="14" viewBox="0 0 17 14"><path d="M0.8 8 L8 0.8 L16 5.5 L8.5 13.2Z" fill="#aac6ee" stroke="#5a6680" stroke-width="1"/><path d="M4.5 7 L9 3 M6.5 8.5 L11 4.5 M8.5 10 L13 6" stroke="#5a80c0" stroke-width="0.8"/><path d="M1 8.3 L8.5 13.2" stroke="#4a5264" stroke-width="1.2"/></svg>
<div class="t" style="left:79px;top:442px;font-size:17px">钟祥光谷鑫城<span style="font-family:'Liberation Mono',monospace;font-size:15.5px;letter-spacing:-0.8px;position:relative;top:0px">(GZ2014-150400000000</span></div>
</div>
<div class="abs" style="left:0;top:644px;width:331px;height:20px;background:linear-gradient(#e6e6e6,#f0f0f0)"></div>
<svg class="abs" style="left:7px;top:649px" width="6" height="9" viewBox="0 0 6 9"><path d="M5 0.5 V8.5 L0.5 4.5Z" fill="#555"/></svg>
<svg class="abs" style="left:318px;top:649px" width="6" height="9" viewBox="0 0 6 9"><path d="M1 0.5 V8.5 L5.5 4.5Z" fill="#555"/></svg>
<div class="abs" style="left:22px;top:644px;width:129px;height:19px;border:1px solid #9a9a9a;border-radius:2px;background:linear-gradient(#f4f4f4,#e0e0e0 50%,#d4d4d4 51%,#cfcfcf)"></div>
<div class="abs" style="left:82px;top:650px;width:1px;height:7px;background:#555;box-shadow:3px 0 0 #555,6px 0 0 #555"></div>
<div class="abs" style="left:0;top:664px;width:331px;height:29px;background:#fcfaf3"></div>
<div class="abs" style="left:3px;top:668px;width:257px;height:23px;border:1px solid #a8a8a8;background:#fdf9ec"></div>
<svg class="abs" style="left:269px;top:670px" width="15" height="15" viewBox="0 0 15 15"><circle cx="5.5" cy="5.5" r="4" fill="#fff" stroke="#111" stroke-width="1.8"/><path d="M8.5 8.5 L13.5 13.5" stroke="#111" stroke-width="2.6" stroke-linecap="round"/></svg>
<div class="t" style="left:289px;top:670px;font-size:15.5px">查找</div>
<div class="abs" style="left:0;top:693px;width:331px;height:27px;background:#fff"></div>
<div class="abs" style="left:0;top:693px;width:331px;height:2px;background:#707070"></div>
<svg class="abs" style="left:8px;top:693px" width="46" height="20" viewBox="0 0 46 20"><path d="M0.5 0 L5.5 19 H38 L43.5 0" fill="#f2f2f2" stroke="#6a6a6a"/></svg>
<div class="t" style="left:14px;top:695px;font-size:14.5px">树形</div>
<div class="abs" style="left:335px;top:107px;width:1031px;height:202px;background:#fff"></div>
<div class="t" style="left:364px;top:123px;font-size:15px;color:#000">项目名称</div>
<div class="t" style="left:422px;top:123px;font-size:15px;color:#000">：</div>
<div class="t" style="left:446px;top:123px;font-size:15px;color:#6a6a6a">随州新天地花园<span style="font-family:'Liberation Mono',monospace;font-size:13.33px;letter-spacing:0px;position:relative;top:-2px">18-22#</span>楼消防工程<span style="font-family:'Liberation Mono',monospace;font-size:13.33px;letter-spacing:0px;position:relative;top:-2px">(GZ2014-1705000000000</span></div>
<div class="abs" style="left:446px;top:141px;width:399px;height:1px;background:#5a5a5a"></div>
<div class="t" style="left:364px;top:162px;font-size:15px;color:#000">创</div><div class="t" style="left:387px;top:162px;font-size:15px;color:#000">建</div><div class="t" style="left:410px;top:162px;font-size:15px;color:#000">人</div><div class="t" style="left:422px;top:162px;font-size:15px;color:#000">：</div>
<div class="t" style="left:446px;top:161px;font-size:15px;color:#6a6a6a">陈义奎</div>
<div class="abs" style="left:446px;top:179px;width:139px;height:1px;background:#5a5a5a"></div>
<div class="t" style="left:614px;top:162px;font-size:15px;color:#000">创建时间</div>
<div class="t" style="left:671px;top:162px;font-size:15px;color:#000">：</div>
<div class="t" style="left:696px;top:162px;font-size:15px;color:#6a6a6a"><span style="font-family:'Liberation Mono',monospace;font-size:13.33px;letter-spacing:0px;position:relative;top:-2px">2014-05-17</span></div>
<div class="abs" style="left:695px;top:179px;width:150px;height:1px;background:#5a5a5a"></div>
<svg class="abs" style="left:826px;top:164px" width="13" height="13" viewBox="0 0 13 13"><rect x="1.5" y="1.5" width="11" height="9" fill="#f4f4f4" stroke="#6a6a6a"/><rect x="1.5" y="1.5" width="11" height="2" fill="#5a6a9a"/><rect x="8" y="5" width="3" height="3" fill="#d02020"/><circle cx="4" cy="9.5" r="3" fill="#fff" stroke="#333"/><path d="M4 8 V9.5 H5.5" stroke="#333" fill="none" stroke-width="0.8"/></svg>
<div class="t" style="left:364px;top:204px;font-size:15px;color:#000">审</div><div class="t" style="left:387px;top:204px;font-size:15px;color:#000">核</div><div class="t" style="left:410px;top:204px;font-size:15px;color:#000">人</div><div class="t" style="left:422px;top:204px;font-size:15px;color:#000">：</div>
<div class="abs" style="left:446px;top:219px;width:139px;height:1px;background:#5a5a5a"></div>
<div class="t" style="left:614px;top:204px;font-size:15px;color:#000">审核状态</div>
<div class="t" style="left:671px;top:204px;font-size:15px;color:#000">：</div>
<div class="t" style="left:696px;top:201px;font-size:15px;color:#6a6a6a">未审核</div>
<div class="abs" style="left:695px;top:219px;width:150px;height:1px;background:#5a5a5a"></div>
<div class="t" style="left:364px;top:242px;font-size:15px;color:#000">审核意见</div>
<div class="t" style="left:422px;top:242px;font-size:15px;color:#000">：</div>
<div class="abs" style="left:446px;top:258px;width:580px;height:1px;background:#5a5a5a"></div>
<div class="t" style="left:364px;top:280px;font-size:15px;color:#000">备</div><div class="t" style="left:411px;top:280px;font-size:15px;color:#000">注</div><div class="t" style="left:422px;top:280px;font-size:15px;color:#000">：</div>
<div class="t" style="left:446px;top:278px;font-size:15px;color:#6a6a6a">随州新天地钢材总计划</div>
<div class="abs" style="left:446px;top:297px;width:580px;height:1px;background:#5a5a5a"></div>
<div class="abs" style="left:336px;top:308px;width:1030px;height:1px;background:#7a7a7a"></div>
<div class="abs" style="left:336px;top:309px;width:1007px;height:334px;background:#fff;overflow:hidden">
<div class="abs" style="left:0;top:0;width:1007px;height:42px;background:#98bfee;border-bottom:2px solid #111"></div>
<div class="abs" style="left:0;top:42px;width:1007px;height:19px;background:#c4e4e4"></div>
<div class="abs" style="left:0;top:43px;width:59px;height:18px;background:#7c5a12"></div>
<div class="t" style="left:3px;top:45px;font-family:'Liberation Mono',monospace;font-size:13.33px;color:#f4ecc8">1</div>
<div class="t" style="left:172px;top:45px;font-family:'Liberation Mono',monospace;font-size:13.33px">S-00015</div>
<div class="t" style="left:248px;top:43px;font-size:15px">角铁</div>
<div class="t" style="left:480px;top:45px;font-family:'Liberation Mono',monospace;font-size:13.33px">40*4*6000mm</div>
<div class="t" style="left:759px;top:43px;font-size:15px">根</div>
<div class="t" style="right:85px;top:45px;font-family:'Liberation Mono',monospace;font-size:13.33px">1.0000</div>
<div class="t" style="right:9px;top:45px;font-family:'Liberation Mono',monospace;font-size:13.33px">340.000</div>
<div class="abs" style="left:0;top:61px;width:1007px;height:19px;background:#fff"></div>
<div class="t" style="left:3px;top:64px;font-family:'Liberation Mono',monospace;font-size:13.33px;color:#000">2</div>
<div class="t" style="left:172px;top:64px;font-family:'Liberation Mono',monospace;font-size:13.33px">S-00018</div>
<div class="t" style="left:248px;top:62px;font-size:15px">弯头</div>
<div class="t" style="left:480px;top:64px;font-family:'Liberation Mono',monospace;font-size:13.33px">150</div>
<div class="t" style="left:759px;top:62px;font-size:15px">个</div>
<div class="t" style="right:85px;top:64px;font-family:'Liberation Mono',monospace;font-size:13.33px">1.0000</div>
<div class="abs" style="left:0;top:80px;width:1007px;height:19px;background:#deeaf7"></div>
<div class="t" style="left:3px;top:83px;font-family:'Liberation Mono',monospace;font-size:13.33px;color:#000">3</div>
<div class="t" style="left:172px;top:83px;font-family:'Liberation Mono',monospace;font-size:13.33px">S-00019</div>
<div class="t" style="left:248px;top:81px;font-size:15px">正三通</div>
<div class="t" style="left:480px;top:83px;font-family:'Liberation Mono',monospace;font-size:13.33px">150</div>
<div class="t" style="left:759px;top:81px;font-size:15px">个</div>
<div class="t" style="right:85px;top:83px;font-family:'Liberation Mono',monospace;font-size:13.33px">1.0000</div>
<div class="abs" style="left:0;top:99px;width:1007px;height:19px;background:#fff"></div>
<div class="t" style="left:3px;top:102px;font-family:'Liberation Mono',monospace;font-size:13.33px;color:#000">4</div>
<div class="t" style="left:172px;top:102px;font-family:'Liberation Mono',monospace;font-size:13.33px">S-00020</div>
<div class="t" style="left:248px;top:100px;font-size:15px">正三通</div>
<div class="t" style="left:480px;top:102px;font-family:'Liberation Mono',monospace;font-size:13.33px">DN100</div>
<div class="t" style="left:759px;top:100px;font-size:15px">个</div>
<div class="t" style="right:85px;top:102px;font-family:'Liberation Mono',monospace;font-size:13.33px">1.0000</div>
<div class="abs" style="left:0;top:118px;width:1007px;height:19px;background:#deeaf7"></div>
<div class="t" style="left:3px;top:121px;font-family:'Liberation Mono',monospace;font-size:13.33px;color:#000">5</div>
<div class="t" style="left:172px;top:121px;font-family:'Liberation Mono',monospace;font-size:13.33px">S-00023</div>
<div class="t" style="left:248px;top:119px;font-size:15px">机三</div>
<div class="t" style="left:480px;top:121px;font-family:'Liberation Mono',monospace;font-size:13.33px">165/76</div>
<div class="t" style="left:759px;top:119px;font-size:15px">个</div>
<div class="t" style="right:85px;top:121px;font-family:'Liberation Mono',monospace;font-size:13.33px">1.0000</div>
<div class="abs" style="left:0;top:137px;width:1007px;height:19px;background:#fff"></div>
<div class="t" style="left:3px;top:140px;font-family:'Liberation Mono',monospace;font-size:13.33px;color:#000">6</div>
<div class="t" style="left:172px;top:140px;font-family:'Liberation Mono',monospace;font-size:13.33px">S-00032</div>
<div class="t" style="left:248px;top:138px;font-size:15px">机三</div>
<div class="t" style="left:480px;top:140px;font-family:'Liberation Mono',monospace;font-size:13.33px">100*65</div>
<div class="t" style="left:759px;top:138px;font-size:15px">只</div>
<div class="t" style="right:85px;top:140px;font-family:'Liberation Mono',monospace;font-size:13.33px">1.0000</div>
<div class="abs" style="left:0;top:156px;width:1007px;height:19px;background:#deeaf7"></div>
<div class="t" style="left:3px;top:159px;font-family:'Liberation Mono',monospace;font-size:13.33px;color:#000">7</div>
<div class="t" style="left:172px;top:159px;font-family:'Liberation Mono',monospace;font-size:13.33px">S-00038</div>
<div class="t" style="left:248px;top:157px;font-size:15px">沟槽大小头</div>
<div class="t" style="left:480px;top:159px;font-family:'Liberation Mono',monospace;font-size:13.33px">150*100</div>
<div class="t" style="left:759px;top:157px;font-size:15px">只</div>
<div class="t" style="right:85px;top:159px;font-family:'Liberation Mono',monospace;font-size:13.33px">1.0000</div>
<div class="abs" style="left:0;top:175px;width:1007px;height:19px;background:#fff"></div>
<div class="t" style="left:3px;top:178px;font-family:'Liberation Mono',monospace;font-size:13.33px;color:#000">8</div>
<div class="t" style="left:172px;top:178px;font-family:'Liberation Mono',monospace;font-size:13.33px">S-00039</div>
<div class="t" style="left:248px;top:176px;font-size:15px">沟槽大小头</div>
<div class="t" style="left:480px;top:178px;font-family:'Liberation Mono',monospace;font-size:13.33px">100*80</div>
<div class="t" style="left:759px;top:176px;font-size:15px">只</div>
<div class="t" style="right:85px;top:178px;font-family:'Liberation Mono',monospace;font-size:13.33px">1.0000</div>
<div class="abs" style="left:0;top:194px;width:1007px;height:19px;background:#deeaf7"></div>
<div class="t" style="left:3px;top:197px;font-family:'Liberation Mono',monospace;font-size:13.33px;color:#000">9</div>
<div class="t" style="left:172px;top:197px;font-family:'Liberation Mono',monospace;font-size:13.33px">S-00042</div>
<div class="t" style="left:248px;top:195px;font-size:15px">卡箍</div>
<div class="t" style="left:480px;top:197px;font-family:'Liberation Mono',monospace;font-size:13.33px">100</div>
<div class="t" style="left:759px;top:195px;font-size:15px">只</div>
<div class="t" style="right:85px;top:197px;font-family:'Liberation Mono',monospace;font-size:13.33px">1.0000</div>
<div class="abs" style="left:0;top:213px;width:1007px;height:19px;background:#fff"></div>
<div class="t" style="left:3px;top:216px;font-family:'Liberation Mono',monospace;font-size:13.33px;color:#000">10</div>
<div class="t" style="left:172px;top:216px;font-family:'Liberation Mono',monospace;font-size:13.33px">S-00043</div>
<div class="t" style="left:248px;top:214px;font-size:15px">卡箍</div>
<div class="t" style="left:480px;top:216px;font-family:'Liberation Mono',monospace;font-size:13.33px">150</div>
<div class="t" style="left:759px;top:214px;font-size:15px">只</div>
<div class="t" style="right:85px;top:216px;font-family:'Liberation Mono',monospace;font-size:13.33px">1.0000</div>
<div class="abs" style="left:0;top:232px;width:1007px;height:19px;background:#deeaf7"></div>
<div class="t" style="left:3px;top:235px;font-family:'Liberation Mono',monospace;font-size:13.33px;color:#000">11</div>
<div class="t" style="left:172px;top:235px;font-family:'Liberation Mono',monospace;font-size:13.33px">S-00049</div>
<div class="t" style="left:248px;top:233px;font-size:15px">角铁</div>
<div class="t" style="left:480px;top:235px;font-family:'Liberation Mono',monospace;font-size:13.33px">50*5*6000mm</div>
<div class="t" style="left:759px;top:233px;font-size:15px">根</div>
<div class="t" style="right:85px;top:235px;font-family:'Liberation Mono',monospace;font-size:13.33px">1.0000</div>
<div class="t" style="right:9px;top:235px;font-family:'Liberation Mono',monospace;font-size:13.33px">130.000</div>
<div class="abs" style="left:0;top:251px;width:1007px;height:19px;background:#fff"></div>
<div class="t" style="left:3px;top:254px;font-family:'Liberation Mono',monospace;font-size:13.33px;color:#000">12</div>
<div class="t" style="left:172px;top:254px;font-family:'Liberation Mono',monospace;font-size:13.33px">S-00065</div>
<div class="t" style="left:248px;top:252px;font-size:15px">镀锌钢管</div>
<div class="t" style="left:480px;top:254px;font-family:'Liberation Mono',monospace;font-size:13.33px">DN80*3.25</div>
<div class="t" style="left:759px;top:252px;font-size:15px">根</div>
<div class="t" style="right:85px;top:254px;font-family:'Liberation Mono',monospace;font-size:13.33px">1.0000</div>
<div class="t" style="right:9px;top:254px;font-family:'Liberation Mono',monospace;font-size:13.33px">35.000</div>
<div class="abs" style="left:0;top:270px;width:1007px;height:19px;background:#deeaf7"></div>
<div class="t" style="left:3px;top:273px;font-family:'Liberation Mono',monospace;font-size:13.33px;color:#000">13</div>
<div class="t" style="left:172px;top:273px;font-family:'Liberation Mono',monospace;font-size:13.33px">S-00067</div>
<div class="t" style="left:248px;top:271px;font-size:15px">镀锌钢管</div>
<div class="t" style="left:480px;top:273px;font-family:'Liberation Mono',monospace;font-size:13.33px">DN32*2.75</div>
<div class="t" style="left:759px;top:271px;font-size:15px">根</div>
<div class="t" style="right:85px;top:273px;font-family:'Liberation Mono',monospace;font-size:13.33px">1.0000</div>
<div class="t" style="right:9px;top:273px;font-family:'Liberation Mono',monospace;font-size:13.33px">160.000</div>
<div class="abs" style="left:0;top:289px;width:1007px;height:19px;background:#fff"></div>
<div class="t" style="left:3px;top:292px;font-family:'Liberation Mono',monospace;font-size:13.33px;color:#000">14</div>
<div class="t" style="left:172px;top:292px;font-family:'Liberation Mono',monospace;font-size:13.33px">S-00081</div>
<div class="t" style="left:248px;top:290px;font-size:15px">防爆波阀</div>
<div class="t" style="left:480px;top:292px;font-family:'Liberation Mono',monospace;font-size:13.33px">DN100</div>
<div class="t" style="left:759px;top:290px;font-size:15px">台</div>
<div class="t" style="right:85px;top:292px;font-family:'Liberation Mono',monospace;font-size:13.33px">1.0000</div>
<div class="abs" style="left:0;top:308px;width:1007px;height:19px;background:#deeaf7"></div>
<div class="t" style="left:3px;top:311px;font-family:'Liberation Mono',monospace;font-size:13.33px;color:#000">15</div>
<div class="t" style="left:172px;top:311px;font-family:'Liberation Mono',monospace;font-size:13.33px">S-00082</div>
<div class="t" style="left:248px;top:309px;font-size:15px">镀锌钢管</div>
<div class="t" style="left:480px;top:311px;font-family:'Liberation Mono',monospace;font-size:13.33px">DN25*2.75</div>
<div class="t" style="left:759px;top:309px;font-size:15px">根</div>
<div class="t" style="right:85px;top:311px;font-family:'Liberation Mono',monospace;font-size:13.33px">1.0000</div>
<div class="t" style="right:9px;top:311px;font-family:'Liberation Mono',monospace;font-size:13.33px">410.000</div>
<div class="abs" style="left:59px;top:42px;width:1px;height:272px;background:#c4c4c4"></div>
<div class="abs" style="left:169px;top:42px;width:1px;height:272px;background:#c4c4c4"></div>
<div class="abs" style="left:245px;top:42px;width:1px;height:272px;background:#c4c4c4"></div>
<div class="abs" style="left:402px;top:42px;width:1px;height:272px;background:#c4c4c4"></div>
<div class="abs" style="left:478px;top:42px;width:1px;height:272px;background:#c4c4c4"></div>
<div class="abs" style="left:603px;top:42px;width:1px;height:272px;background:#c4c4c4"></div>
<div class="abs" style="left:679px;top:42px;width:1px;height:272px;background:#c4c4c4"></div>
<div class="abs" style="left:755px;top:42px;width:1px;height:272px;background:#c4c4c4"></div>
<div class="abs" style="left:831px;top:42px;width:1px;height:272px;background:#c4c4c4"></div>
<div class="abs" style="left:922px;top:42px;width:1px;height:272px;background:#c4c4c4"></div>
<div class="abs" style="left:998px;top:42px;width:1px;height:272px;background:#c4c4c4"></div>
<div class="abs" style="left:59px;top:0;width:1px;height:42px;background:#111"></div>
<div class="abs" style="left:169px;top:0;width:1px;height:42px;background:#111"></div>
<div class="abs" style="left:245px;top:0;width:1px;height:42px;background:#111"></div>
<div class="abs" style="left:402px;top:0;width:1px;height:42px;background:#111"></div>
<div class="abs" style="left:478px;top:0;width:1px;height:42px;background:#111"></div>
<div class="abs" style="left:603px;top:0;width:1px;height:42px;background:#111"></div>
<div class="abs" style="left:679px;top:0;width:1px;height:42px;background:#111"></div>
<div class="abs" style="left:755px;top:0;width:1px;height:42px;background:#111"></div>
<div class="abs" style="left:831px;top:0;width:1px;height:42px;background:#111"></div>
<div class="abs" style="left:922px;top:0;width:1px;height:42px;background:#111"></div>
<div class="abs" style="left:998px;top:0;width:1px;height:42px;background:#111"></div>
<div class="abs" style="left:998px;top:21px;width:9px;height:1px;background:#111"></div>
<div class="t" style="left:0px;top:16px;width:59px;text-align:center;font-size:12px;color:#000">序号</div>
<div class="t" style="left:59px;top:16px;width:110px;text-align:center;font-size:12px;color:#000">系统</div>
<div class="t" style="left:169px;top:16px;width:76px;text-align:center;font-size:12px;color:#000">材料编码</div>
<div class="t" style="left:245px;top:16px;width:157px;text-align:center;font-size:12px;color:#000">材料名称</div>
<div class="t" style="left:402px;top:16px;width:76px;text-align:center;font-size:12px;color:#000"><span style="font-family:'Liberation Mono',monospace;font-size:10px">@</span>配置参数</div>
<div class="t" style="left:478px;top:16px;width:125px;text-align:center;font-size:12px;color:#000">规格型号</div>
<div class="t" style="left:603px;top:16px;width:76px;text-align:center;font-size:12px;color:#000">品牌</div>
<div class="t" style="left:679px;top:16px;width:76px;text-align:center;font-size:12px;color:#000"><span style="font-family:'Liberation Mono',monospace;font-size:10px">@</span>产地</div>
<div class="t" style="left:755px;top:16px;width:76px;text-align:center;font-size:12px;color:#e01010">单位</div>
<div class="t" style="left:831px;top:16px;width:91px;text-align:center;font-size:12px;color:#000">系数</div>
<div class="t" style="left:922px;top:16px;width:76px;text-align:center;font-size:12px;color:#e01010">预算数量</div>
<div class="t" style="left:999px;top:6px;font-size:12px;color:#e01010">单</div>
<svg class="abs" style="left:470px;top:24px" width="9" height="8" viewBox="0 0 9 8"><path d="M0.5 0.5 H8.5 L4.5 7.5Z" fill="#b8d4f4" stroke="#e8f4ff" stroke-width="1"/><path d="M0.5 0.5 H8.5" stroke="#7a98b8" stroke-width="1"/></svg>
<div class="abs" style="left:0;top:314px;width:1007px;height:20px;background:#98bfee;border-top:2px solid #111;border-bottom:1px solid #111"></div>
<div class="abs" style="left:59px;top:314px;width:1px;height:20px;background:#111"></div>
<div class="abs" style="left:169px;top:314px;width:1px;height:20px;background:#111"></div>
<div class="abs" style="left:245px;top:314px;width:1px;height:20px;background:#111"></div>
<div class="abs" style="left:402px;top:314px;width:1px;height:20px;background:#111"></div>
<div class="abs" style="left:478px;top:314px;width:1px;height:20px;background:#111"></div>
<div class="abs" style="left:603px;top:314px;width:1px;height:20px;background:#111"></div>
<div class="abs" style="left:679px;top:314px;width:1px;height:20px;background:#111"></div>
<div class="abs" style="left:755px;top:314px;width:1px;height:20px;background:#111"></div>
<div class="abs" style="left:831px;top:314px;width:1px;height:20px;background:#111"></div>
<div class="abs" style="left:922px;top:314px;width:1px;height:20px;background:#111"></div>
<div class="abs" style="left:998px;top:314px;width:1px;height:20px;background:#111"></div>
<div class="t" style="left:175px;top:318px;font-size:12px;word-spacing:3px">共 <span style="font-family:'Liberation Mono',monospace;font-size:12px">27</span> 记录</div>
<div class="t" style="right:88px;top:319px;font-size:11px;font-family:'Liberation Sans',sans-serif">27</div>
</div>
<div class="abs" style="left:336px;top:309px;width:1px;height:355px;background:#6a6a6a"></div>
<div class="abs" style="left:1343px;top:309px;width:21px;height:334px;background:linear-gradient(90deg,#e6e6e6,#f2f2f2)"></div>
<svg class="abs" style="left:1349px;top:317px" width="10" height="6" viewBox="0 0 10 6"><path d="M0.5 5.5 L5 0.5 L9.5 5.5Z" fill="#3a3a3a"/></svg>
<div class="abs" style="left:1345px;top:332px;width:18px;height:19px;border:1px solid #a8a8a8;border-radius:2px;background:linear-gradient(90deg,#f8f8f8,#e4e4e4)"></div>
<div class="abs" style="left:1350px;top:337px;width:8px;height:1px;background:#444;box-shadow:0 3px 0 #444,0 6px 0 #444"></div>
<svg class="abs" style="left:1349px;top:629px" width="10" height="6" viewBox="0 0 10 6"><path d="M0.5 0.5 L5 5.5 L9.5 0.5Z" fill="#3a3a3a"/></svg>
<div class="abs" style="left:1364px;top:106px;width:2px;height:614px;background:#a0a0a0"></div>
<div class="abs" style="left:337px;top:643px;width:1027px;height:22px;background:linear-gradient(#e6e6e6,#f0f0f0)"></div>
<svg class="abs" style="left:343px;top:649px" width="6" height="9" viewBox="0 0 6 9"><path d="M5 0.5 V8.5 L0.5 4.5Z" fill="#444"/></svg>
<div class="abs" style="left:359px;top:644px;width:19px;height:19px;border:1px solid #a0a0a0;border-radius:2px;background:linear-gradient(#f6f6f6,#d8d8d8)"></div>
<div class="abs" style="left:365px;top:650px;width:1px;height:7px;background:#444;box-shadow:3px 0 0 #444,6px 0 0 #444"></div>
<svg class="abs" style="left:1330px;top:649px" width="6" height="9" viewBox="0 0 6 9"><path d="M1 0.5 V8.5 L5.5 4.5Z" fill="#444"/></svg>
<div class="abs" style="left:336px;top:664px;width:1028px;height:1px;background:#6a6a6a"></div>
<div class="abs" style="left:337px;top:665px;width:1027px;height:28px;background:linear-gradient(#e8eefa 0,#c4d6f6 2px,#a8c2f0 12px,#a4c0f0 21px,#c0d4f6 26px,#e0e8f8 28px)"></div>
<div class="abs" style="left:336px;top:693px;width:1028px;height:1px;background:#8a8a8a"></div>
<div class="abs" style="left:341px;top:669px;width:82px;height:18px;background:#eef2f8"></div>
<div class="abs" style="left:341px;top:670px;width:14px;height:15px;border:1px solid #9a9a9a;border-top:2px solid #606060;border-left:2px solid #707070;background:#f4f4f4"></div>
<div class="t" style="left:363px;top:669px;font-size:15px;color:#8e8e8e">批量录入</div>
<svg class="abs" style="left:757px;top:670px" width="15" height="15" viewBox="0 0 15 15"><circle cx="5.5" cy="5.5" r="4" fill="#fff" stroke="#111" stroke-width="1.8"/><path d="M8.5 8.5 L13.5 13.5" stroke="#111" stroke-width="2.6" stroke-linecap="round"/></svg>
<div class="t" style="left:776px;top:669px;font-size:15px;color:#000">查i</div>
<svg class="abs" style="left:806px;top:670px" width="15" height="15" viewBox="0 0 15 15"><path d="M1.5 1.5 H10 V13 H1.5Z" fill="none" stroke="#d8e0ec" stroke-width="1.2"/><path d="M3 4 H8 M3 6.5 H8 M3 9 H6" stroke="#d8e0ec"/><path d="M10 10 L14 14 M14 10 L10 14" stroke="#d8e0ec" stroke-width="1.2"/></svg>
<div class="t" style="left:826px;top:669px;font-size:15px;color:#c8d4e6">重新编号</div>
<svg class="abs" style="left:903px;top:671px" width="15" height="12" viewBox="0 0 15 12"><path d="M0.5 6 Q7.5 -1 14.5 6 Q7.5 13 0.5 6Z" fill="#fff" stroke="#111" stroke-width="1.3"/><circle cx="7.5" cy="6" r="2.8" fill="#111"/></svg>
<div class="t" style="left:923px;top:669px;font-size:15px;color:#000">查看汇总</div>
<svg class="abs" style="left:996px;top:670px" width="15" height="15" viewBox="0 0 15 15"><path d="M1.5 1.5 H8.5 L11.5 4.5 V13.5 H1.5Z" fill="#fff" stroke="#111" stroke-width="1.3"/><rect x="6" y="7" width="7" height="6" fill="#111"/><path d="M7.5 9 H11.5" stroke="#fff"/></svg>
<div class="t" style="left:1017px;top:669px;font-size:15px;color:#000">导出</div>
<svg class="abs" style="left:1064px;top:669px" width="18" height="16" viewBox="0 0 18 16"><path d="M1 1 L9 9 M9 1 L1 9" stroke="#111" stroke-width="1.8"/><path d="M7 14 L15 5 L17 7 L9 15.5Z" fill="#fff" stroke="#111" stroke-width="1.2"/><path d="M1 13 H5 M1 15 H4" stroke="#111" stroke-dasharray="1 1"/></svg>
<div class="t" style="left:1086px;top:669px;font-size:15px;color:#000">导入</div>
<svg class="abs" style="left:1136px;top:670px" width="15" height="15" viewBox="0 0 15 15"><path d="M1.5 1.5 H10.5 V9 H7 V12.5 H1.5Z" fill="#fff" stroke="#111" stroke-width="1.3"/><path d="M3.5 4.5 H8.5 M3.5 7 H7" stroke="#111"/><path d="M11.5 8.5 V14.5 M8.5 11.5 H14.5" stroke="#111" stroke-width="1.8"/></svg>
<div class="t" style="left:1156px;top:669px;font-size:15px;color:#000">新增</div>
<svg class="abs" style="left:1206px;top:670px" width="15" height="15" viewBox="0 0 15 15"><path d="M1.5 1.5 H10.5 V9 H7 V12.5 H1.5Z" fill="#fff" stroke="#111" stroke-width="1.3"/><path d="M3.5 4.5 H8.5 M3.5 7 H7" stroke="#111"/><path d="M9 9 L14 14 M14 9 L9 14" stroke="#111" stroke-width="1.8"/></svg>
<div class="t" style="left:1226px;top:669px;font-size:15px;color:#000">删除</div>
<svg class="abs" style="left:1276px;top:671px" width="13" height="13" viewBox="0 0 13 13"><path d="M1.5 1.5 L11.5 11.5 M11.5 1.5 L1.5 11.5" stroke="#111" stroke-width="2"/></svg>
<div class="t" style="left:1295px;top:669px;font-size:15px;color:#000">全部删除</div>
<div class="abs" style="left:335px;top:693px;width:1029px;height:27px;background:#ebe9e4"></div>
<div class="abs" style="left:336px;top:695px;width:1028px;height:1px;background:#8a8a8a"></div>
<svg class="abs" style="left:340px;top:695px" width="280" height="23" viewBox="0 0 280 23"><path d="M222.5 0.5 L226.5 21.5 H268 L273 0.5" fill="#f4f3f0" stroke="#9a9a9a"/><path d="M146.5 0.5 L151.5 21.5 H222 L226.5 0.5" fill="#f4f3f0" stroke="#9a9a9a"/><path d="M4.5 0 L13 21.5 H142 L149.5 0" fill="#f8f8f6" stroke="#707070"/></svg>
<div class="t" style="left:358px;top:700px;font-size:15px;color:#000">项目材料预算编辑</div>
<div class="t" style="left:495px;top:700px;font-size:15px;color:#8e8e8e">协同办公</div>
<div class="t" style="left:572px;top:700px;font-size:15px;color:#8e8e8e">附件</div>
<div class="abs" style="left:0;top:720px;width:1366px;height:9px;background:linear-gradient(90deg,#16324c 0,#1f4466 120px,#2c5a80 300px,#4a78a0 480px,#6a94b8 560px,#4e7ca2 680px,#3a6890 820px,#2e5878 900px,#3c6688 1000px,#5c82a4 1120px,#486e90 1250px,#5a7894 1340px,#8aa0b4 1366px)"></div>
<div class="abs" style="left:0;top:720px;width:1366px;height:1px;background:#0e2236"></div>
<div class="abs" style="left:17px;top:721px;width:31px;height:31px;border-radius:50%;background:radial-gradient(circle at 50% 30%,#a8d0f0,#3a7ab8 60%,#1a3a60);border:1px solid #0a1a2a"></div>
<div class="abs" style="left:89px;top:722px;width:34px;height:7px;background:linear-gradient(#f8e8a0,#d0b060);border-radius:2px 2px 0 0"></div>
<div class="abs" style="left:142px;top:721px;width:66px;height:8px;border:1px solid #1a2a3a;border-bottom:0;border-radius:3px 3px 0 0;background:linear-gradient(#c8d8e8,#9ab4cc)"></div>
<div class="abs" style="left:158px;top:723px;width:36px;height:6px;background:#2a8ae8;border-radius:3px 3px 0 0"></div>
<div class="abs" style="left:212px;top:721px;width:66px;height:8px;border:1px solid #1a2a3a;border-bottom:0;border-radius:3px 3px 0 0;background:linear-gradient(#c8d8e8,#9ab4cc)"></div>
<div class="abs" style="left:282px;top:721px;width:66px;height:8px;border:1px solid #1a2a3a;border-bottom:0;border-radius:3px 3px 0 0;background:linear-gradient(#c8d8e8,#9ab4cc)"></div>
<div class="abs" style="left:298px;top:723px;width:36px;height:6px;background:#d83a8a;border-radius:3px 3px 0 0"></div>
<div class="abs" style="left:352px;top:721px;width:66px;height:8px;border:1px solid #1a2a3a;border-bottom:0;border-radius:3px 3px 0 0;background:linear-gradient(#c8d8e8,#9ab4cc)"></div>
<div class="abs" style="left:242px;top:724px;width:4px;height:5px;background:#222"></div>
<div class="abs" style="left:1338px;top:721px;width:28px;height:8px;border-left:1px solid #2a3a4a;background:linear-gradient(#a0b4c6,#7890a6)"></div>
</body></html>
